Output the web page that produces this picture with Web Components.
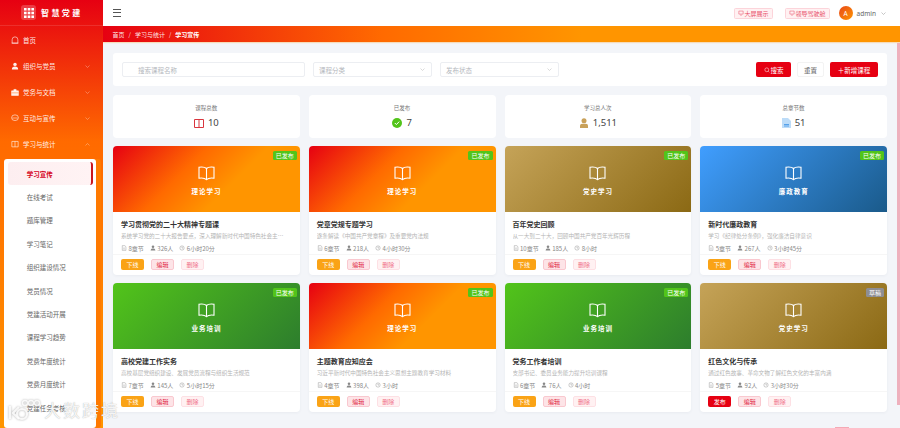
<!DOCTYPE html>
<html lang="zh">
<head>
<meta charset="utf-8">
<title>智慧党建</title>
<style>
	html, body { margin: 0; height: 100%; overflow: hidden; background: #f3f5f9; }
	body { font-family: "Noto Sans CJK SC", "Noto Sans", sans-serif; }
	app-shell { width: 900px; height: 428px; }
</style>
</head>
<body>
<app-shell></app-shell>

<script>
// Общие иконки, чтобы не дублировать svg в каждом компоненте.
const ICONS = {
	home: '<path d="M2 12.500V6.500a5 5 0 0 1 10 0v6zM1 12.500h12" fill="none" stroke="currentColor" stroke-width="1.100"/>',
	user: '<circle cx="7" cy="4.200" r="3" fill="currentColor"/><path d="M1.500 13c0-3.500 2-5 5.500-5s5.500 1.500 5.500 5z" fill="currentColor"/>',
	case: '<path d="M1 5h12v8H1zM5 5V2.500h4V5" fill="currentColor" stroke="currentColor"/><path d="M1 8.500h12" stroke="#ff6a00" stroke-width=".8"/>',
	chat: '<ellipse cx="7" cy="6.500" rx="6" ry="5" fill="none" stroke="currentColor" stroke-width="1.100"/><path d="M2 7h10" stroke="currentColor"/>',
	book: '<path d="M1.500 2.500h11v9.500h-11zM7 2.500V12" fill="none" stroke="currentColor" stroke-width="1.100"/>',
	doc: '<path d="M3 1.500h6l2.500 2.500v8.500H3z" fill="none" stroke="currentColor"/><path d="M5 7h4M5 9.500h4" stroke="currentColor" stroke-width=".8"/>',
	clock: '<circle cx="7" cy="7" r="5" fill="none" stroke="currentColor"/><path d="M7 4v3.200h2.500" fill="none" stroke="currentColor"/>',
	search: '<circle cx="6.500" cy="6.500" r="4.500" fill="none" stroke="currentColor" stroke-width="1.200"/><path d="M10 10l2.500 2.500" stroke="currentColor" stroke-width="1.200"/>',
	screen: '<path d="M2 2.500h10v7H2zM5 12h4" fill="none" stroke="currentColor" stroke-width="1.200"/>',
	chevron: '<path d="M3 5l4 4 4-4" fill="none" stroke="currentColor" stroke-width="1.100"/>',
	chevronUp: '<path d="M3 9l4-4 4 4" fill="none" stroke="currentColor" stroke-width="1.100"/>',
};

function icon(name, size, extra = '') {
	return `<svg width="${size}" height="${size}" viewBox="0 0 14 14" ${extra}>${ICONS[name]}</svg>`;
}

const BANNERS = {
	theory: 'linear-gradient(135deg, #e60012 0%, #ff6a00 38%, #ff9500 62%, #ff9500 100%)',
	history: 'linear-gradient(135deg, #c5a358 0%, #8b6914 100%)',
	clean: 'linear-gradient(135deg, #409eff 0%, #1a5a8a 100%)',
	work: 'linear-gradient(135deg, #52c41a 0%, #2d7d2d 100%)',
};

const COURSES = [
	{ kind: 'theory', label: '理论学习', title: '学习贯彻党的二十大精神专题课', desc: '系统学习党的二十大报告要点，深入理解新时代中国特色社会主义思想的核心要义', ch: '8章节', people: '326人', time: '6小时20分', state: '已发布' },
	{ kind: 'theory', label: '理论学习', title: '党章党规专题学习', desc: '逐条解读《中国共产党章程》及重要党内法规', ch: '6章节', people: '218人', time: '4小时30分', state: '已发布' },
	{ kind: 'history', label: '党史学习', title: '百年党史回顾', desc: '从一大到二十大，回顾中国共产党百年光辉历程', ch: '10章节', people: '185人', time: '8小时', state: '已发布' },
	{ kind: 'clean', label: '廉政教育', title: '新时代廉政教育', desc: '学习《纪律处分条例》，强化廉洁自律意识', ch: '5章节', people: '267人', time: '3小时45分', state: '已发布' },
	{ kind: 'work', label: '业务培训', title: '高校党建工作实务', desc: '高校基层党组织建设、发展党员流程与组织生活规范', ch: '7章节', people: '145人', time: '5小时15分', state: '已发布' },
	{ kind: 'theory', label: '理论学习', title: '主题教育应知应会', desc: '习近平新时代中国特色社会主义思想主题教育学习材料', ch: '4章节', people: '398人', time: '3小时', state: '已发布' },
	{ kind: 'work', label: '业务培训', title: '党务工作者培训', desc: '支部书记、委员业务能力提升培训课程', ch: '6章节', people: '76人', time: '4小时', state: '已发布' },
	{ kind: 'history', label: '党史学习', title: '红色文化与传承', desc: '通过红色故事、革命文物了解红色文化的丰富内涵', ch: '5章节', people: '92人', time: '3小时30分', state: '草稿' },
];

class SideNav extends HTMLElement {
	constructor() {
		super();
		this.attachShadow({ mode: 'open' });
		const main = [['home', '首页'], ['user', '组织与党员', 1], ['case', '党务与文档', 1], ['chat', '互动与宣传', 1], ['book', '学习与统计', 2]];
		const subs = ['学习宣传', '在线考试', '题库管理', '学习笔记', '组织建设情况', '党员情况', '党建活动开展', '课程学习趋势', '党费年度统计', '党费月度统计', '党建任务考核'];
		this.shadowRoot.innerHTML = `
			<style>
				:host { display: flex; flex-direction: column; width: 103px; height: 428px; flex: none; overflow: hidden; color: #fff;
					background: linear-gradient(180deg, #e60012 0%, #ff6a00 33%, #ff9500 100%); }
				.logo { height: 26px; flex: none; box-sizing: border-box; display: flex; align-items: center; padding-left: 21px; gap: 5px;
					border-bottom: 1px solid rgba(255,255,255,.12); font-size: 8px; font-weight: 700; letter-spacing: 2.400px; }
				.mark { width: 15px; height: 15px; border-radius: 3px; background: rgba(255,255,255,.22); display: grid; place-items: center; }
				.main { display: flex; flex-direction: column; padding-top: 1px; }
				.main div { height: 26px; display: flex; align-items: center; padding: 0 12px 0 11px; gap: 4px; font-size: 6.500px; color: rgba(255,255,255,.92); }
				.main span { flex: 1; }
				.main svg:last-child { opacity: .6; }
				.subs { margin: 2px 7px 0 4px; background: #fff; border-radius: 3px; padding: 3px 0 0; display: flex; flex-direction: column; box-shadow: 5px 0 0 #ff7a00; flex: 1; }
				.subs div { height: 23.400px; flex: none; display: flex; align-items: center; padding-left: 22.700px; font-size: 6.500px; color: #666; }
				.subs div.on { margin: 0 3.500px; padding-left: 19.200px; color: #d5001a; font-weight: 700;
					background: linear-gradient(90deg, #fdeef0, #fff3f4); border-right: 2px solid #c9151e; border-radius: 3px; box-sizing: border-box; }
			</style>
			<div class="logo">
				<span class="mark"><svg width="10" height="10" viewBox="0 0 10 10" fill="#fff"><path d="M0 0h2.600v2.600H0zM3.700 0h2.600v2.600H3.700zM7.400 0H10v2.600H7.400zM0 3.700h2.600v2.600H0zM3.700 3.700h2.600v2.600H3.700zM7.400 3.700H10v2.600H7.400zM0 7.400h2.600V10H0zM3.700 7.400h2.600V10H3.700zM7.400 7.400H10V10H7.400z"/></svg></span>
				<span>智慧党建</span>
			</div>
			<nav class="main">
				${main.map(([ic, text, arrow]) => `<div>${icon(ic, 8)}<span>${text}</span>${arrow ? icon(arrow === 2 ? 'chevronUp' : 'chevron', 7) : ''}</div>`).join('')}
			</nav>
			<nav class="subs">
				${subs.map((text, i) => `<div class="${i === 0 ? 'on' : ''}">${text}</div>`).join('')}
			</nav>
		`;
	}
}

class TopBar extends HTMLElement {
	constructor() {
		super();
		this.attachShadow({ mode: 'open' });
		this.shadowRoot.innerHTML = `
			<style>
				:host { display: flex; align-items: center; height: 26px; flex: none; background: #fff; padding: 0 13px 0 10px; box-sizing: border-box; font-size: 6px; color: #666; }
				.menu { width: 8px; height: 6px; border-top: 1px solid #555; border-bottom: 1px solid #555; position: relative; margin-right: auto; }
				.menu::after { content: ""; position: absolute; left: 0; right: 0; top: 2px; height: 1px; background: #555; }
				.tag { height: 11px; display: flex; align-items: center; gap: 1px; padding: 0 3px; border-radius: 1.500px; color: #e8506a; background: #fff1f2; border: 1px solid #fcd4da; box-sizing: border-box; }
				.tag + .tag { margin-left: 12px; }
				.user { display: flex; align-items: center; gap: 4px; margin-left: 9px; font-size: 6.500px; font-family: "Noto Sans", sans-serif; color: #666; }
				.ava { width: 14px; height: 14px; border-radius: 50%; color: #fff; font-size: 6.500px; display: grid; place-items: center; background: linear-gradient(135deg, #e8481a, #ff9500); }
				.user svg { color: #999; }
			</style>
			<div class="menu"></div>
			<div class="tag">${icon('screen', 6)}大屏展示</div>
			<div class="tag">${icon('screen', 6)}领导驾驶舱</div>
			<div class="user"><span class="ava">A</span>admin${icon('chevron', 7)}</div>
		`;
	}
}

class CrumbBar extends HTMLElement {
	constructor() {
		super();
		this.attachShadow({ mode: 'open' });
		this.shadowRoot.innerHTML = `
			<style>
				:host { display: flex; align-items: center; height: 16px; flex: none; padding-left: 9.500px; gap: 4px; font-size: 6px; color: rgba(255,255,255,.9);
					background: linear-gradient(90deg, #e60012 0%, #ff6a00 35%, #ff9500 60%, #ff9500 100%); box-shadow: 0 1px 1px rgba(255,149,0,.25); }
				b { color: #fff; }
			</style>
			<span>首页</span><span>/</span><span>学习与统计</span><span>/</span><b>学习宣传</b>
		`;
	}
}

class FilterBar extends HTMLElement {
	constructor() {
		super();
		this.attachShadow({ mode: 'open' });
		this.shadowRoot.innerHTML = `
			<style>
				:host { display: flex; align-items: center; height: 33px; background: #fff; border-radius: 3px; padding: 0 9px; box-sizing: border-box; font-size: 6.500px; }
				.field { height: 15px; box-sizing: border-box; border: 1px solid #eceef2; border-radius: 2px; display: flex; align-items: center; color: #b4b7bd; background: #fff; }
				.search { width: 183px; padding-left: 15px; }
				.select { width: 119px; padding: 0 5px; justify-content: space-between; margin-left: 8px; }
				.select svg { color: #bbb; }
				.actions { margin-left: auto; display: flex; gap: 6px; }
				button { font: inherit; height: 15px; padding: 0; border-radius: 2px; display: flex; align-items: center; justify-content: center; gap: 1px; border: 0; }
				.red { background: #e60012; color: #fff; }
				.reset { background: #fff; color: #666; width: 27px; border: 1px solid #f3f3f3; }
			</style>
			<div class="field search">搜索课程名称</div>
			<div class="field select">课程分类${icon('chevron', 7)}</div>
			<div class="field select">发布状态${icon('chevron', 7)}</div>
			<div class="actions">
				<button class="red" style="width:35px">${icon('search', 6)}搜索</button>
				<button class="reset">重置</button>
				<button class="red" style="width:48px">＋新增课程</button>
			</div>
		`;
	}
}

class StatCard extends HTMLElement {
	connectedCallback() {
		if (this.shadowRoot) return;
		this.attachShadow({ mode: 'open' });
		this.shadowRoot.innerHTML = `
			<style>
				:host { display: flex; flex-direction: column; align-items: center; height: 43px; background: #fff; border-radius: 4px; padding-top: 9px; box-sizing: border-box; }
				.label { font-size: 5.500px; color: #777; line-height: 9px; margin-bottom: 3px; }
				.row { display: flex; align-items: center; gap: 4px; font-size: 9.500px; line-height: 14px; color: #444; font-family: "Noto Sans", sans-serif; }
				::slotted(svg) { display: block; }
			</style>
			<div class="label">${this.getAttribute('label')}</div>
			<div class="row"><slot></slot><span>${this.getAttribute('value')}</span></div>
		`;
	}
}

class CourseCard extends HTMLElement {
	setCourse(c) {
		const root = this.shadowRoot || this.attachShadow({ mode: 'open' });
		const draft = c.state === '草稿';
		root.innerHTML = `
			<style>
				:host { display: flex; flex-direction: column; height: 129px; background: #fff; border-radius: 4px; overflow: hidden; box-shadow: 0 1px 3px rgba(40,50,70,.05); }
				.banner { position: relative; height: 66px; flex: none; box-sizing: border-box; padding-top: 4px; display: flex; flex-direction: column; align-items: center; justify-content: center; color: #fff; background: ${BANNERS[c.kind]}; }
				.kind { font-size: 6.500px; font-weight: 700; letter-spacing: 1px; margin-top: 5px; line-height: 10px; }
				.state { position: absolute; top: 5px; right: 3px; height: 9px; padding: 0 3px; line-height: 9px; font-size: 6px; border-radius: 1.500px; background: ${draft ? '#8e8e93' : '#52c41a'}; }
				.body { padding: 6px 8px 0; flex: 1; min-height: 0; }
				.title { font-size: 7px; font-weight: 700; color: #333; line-height: 12px; white-space: nowrap; }
				.desc { font-size: 5.600px; color: #b4b4b4; line-height: 9px; margin-top: 1.500px; white-space: nowrap; overflow: hidden; text-overflow: ellipsis; padding-right: 3px; }
				.meta { display: flex; gap: 6px; font-size: 6px; line-height: 9px; color: #888; margin-top: 3px; }
				.meta span { display: flex; align-items: center; gap: 1.500px; }
				.foot { border-top: 1px solid #f6f6f6; height: 21px; flex: none; display: flex; align-items: center; gap: 7px; padding: 0 8px 1px; box-sizing: border-box; font-size: 6px; }
				.foot div { width: 23px; height: 11px; border-radius: 2px; display: grid; place-items: center; box-sizing: border-box; }
				.main { background: ${draft ? '#e60012' : '#faa316'}; color: #fff; }
				.edit { background: #fde4e7; color: #e0213c; border: 1px solid #f9c8cf; }
				.del { background: #fff1f2; color: #f0718a; border: 1px solid #fde0e4; }
			</style>
			<div class="banner">
				<svg width="17" height="15" viewBox="0 0 17 15" fill="none" stroke="#fff" stroke-width="1.100"><path d="M8.500 2.500C7 1 4 .8 1 1.200v11c3-.4 6 0 7.500 1.500 1.500-1.500 4.500-1.900 7.500-1.500v-11c-3-.4-6-.2-7.500 1.300zM8.500 2.500v11"/></svg>
				<div class="kind">${c.label}</div>
				<div class="state">${c.state}</div>
			</div>
			<div class="body">
				<div class="title">${c.title}</div>
				<div class="desc">${c.desc}</div>
				<div class="meta">
					<span>${icon('doc', 6)}${c.ch}</span>
					<span>${icon('user', 6)}${c.people}</span>
					<span>${icon('clock', 6)}${c.time}</span>
				</div>
			</div>
			<div class="foot">
				<div class="main">${draft ? '发布' : '下线'}</div>
				<div class="edit">编辑</div>
				<div class="del">删除</div>
			</div>
		`;
	}
}

class AppShell extends HTMLElement {
	constructor() {
		super();
		this.attachShadow({ mode: 'open' });
		this.shadowRoot.innerHTML = `
			<style>
				:host { display: flex; position: relative; overflow: hidden; background: #f3f5f9; }
				.column { flex: 1; min-width: 0; display: flex; flex-direction: column; }
				.content { flex: 1; padding: 11px 13px 0 10px; display: flex; flex-direction: column; gap: 9px; }
				.grid { display: grid; grid-template-columns: repeat(4, 1fr); gap: 9px; }
				.cards { gap: 8px 9px; margin-top: -1px; }
				.scroll { position: absolute; top: 43px; right: 0; width: 3px; height: 362px; background: #eeb0bd; }
				.page { position: absolute; left: 835px; top: 427px; width: 14px; height: 4px; background: #f4a9b5; }
				.mark { position: absolute; left: 8px; top: 397px; display: flex; align-items: center; gap: 4px; color: rgba(255,255,255,.88); font-size: 17px; line-height: 26px; letter-spacing: 2px; text-shadow: 0 0 1px rgba(110,110,110,.6); }
				.mark svg { filter: drop-shadow(0 0 1px rgba(110,110,110,.6)); }
			</style>
			<side-nav></side-nav>
			<div class="column">
				<top-bar></top-bar>
				<crumb-bar></crumb-bar>
				<div class="content">
					<filter-bar></filter-bar>
					<div class="grid">
						<stat-card label="课程总数" value="10"><svg width="10" height="9" viewBox="0 0 10 9" fill="none" stroke="#d9363e"><path d="M.5.500h9v8h-9zM5 .500v8"/></svg></stat-card>
						<stat-card label="已发布" value="7"><svg width="10" height="10" viewBox="0 0 10 10"><circle cx="5" cy="5" r="5" fill="#52c41a"/><path d="M2.800 5l1.600 1.600 2.800-3" fill="none" stroke="#fff"/></svg></stat-card>
						<stat-card label="学习总人次" value="1,511"><svg width="10" height="10" viewBox="0 0 10 10" fill="#c9a15a"><circle cx="5" cy="2.800" r="2.500"/><path d="M1 10V7.500C1 6 3 5.800 5 5.800s4 .2 4 1.700V10z"/></svg></stat-card>
						<stat-card label="总章节数" value="51"><svg width="9" height="10" viewBox="0 0 9 10"><path d="M0 0h6l3 3v7H0z" fill="#bddcf8"/><path d="M2 6.500h5M2 8h5" stroke="#3c93e6" stroke-width=".8"/></svg></stat-card>
					</div>
					<div class="grid cards" id="cards"></div>
				</div>
			</div>
			<div class="scroll"></div>
			<div class="page"></div>
			<div class="mark"><svg width="32" height="24" viewBox="0 0 32 24" fill="none" stroke="rgba(255,255,255,.85)" stroke-width="2.200"><path d="M2 8v13M11 9l-6 6 6 6"/><circle cx="14" cy="16" r="5"/><circle cx="17" cy="5" r="2.500" stroke-width="1.400"/><circle cx="23" cy="5" r="2.500" stroke-width="1.400"/><circle cx="29" cy="5" r="2.500" stroke-width="1.400"/></svg><span>大数跨境</span></div>
		`;
		const cards = this.shadowRoot.getElementById('cards');
		COURSES.forEach((course) => {
			const card = document.createElement('course-card');
			card.setCourse(course);
			cards.appendChild(card);
		});
	}
}

customElements.define('side-nav', SideNav);
customElements.define('top-bar', TopBar);
customElements.define('crumb-bar', CrumbBar);
customElements.define('filter-bar', FilterBar);
customElements.define('stat-card', StatCard);
customElements.define('course-card', CourseCard);
customElements.define('app-shell', AppShell);
</script>
</body>
</html>
